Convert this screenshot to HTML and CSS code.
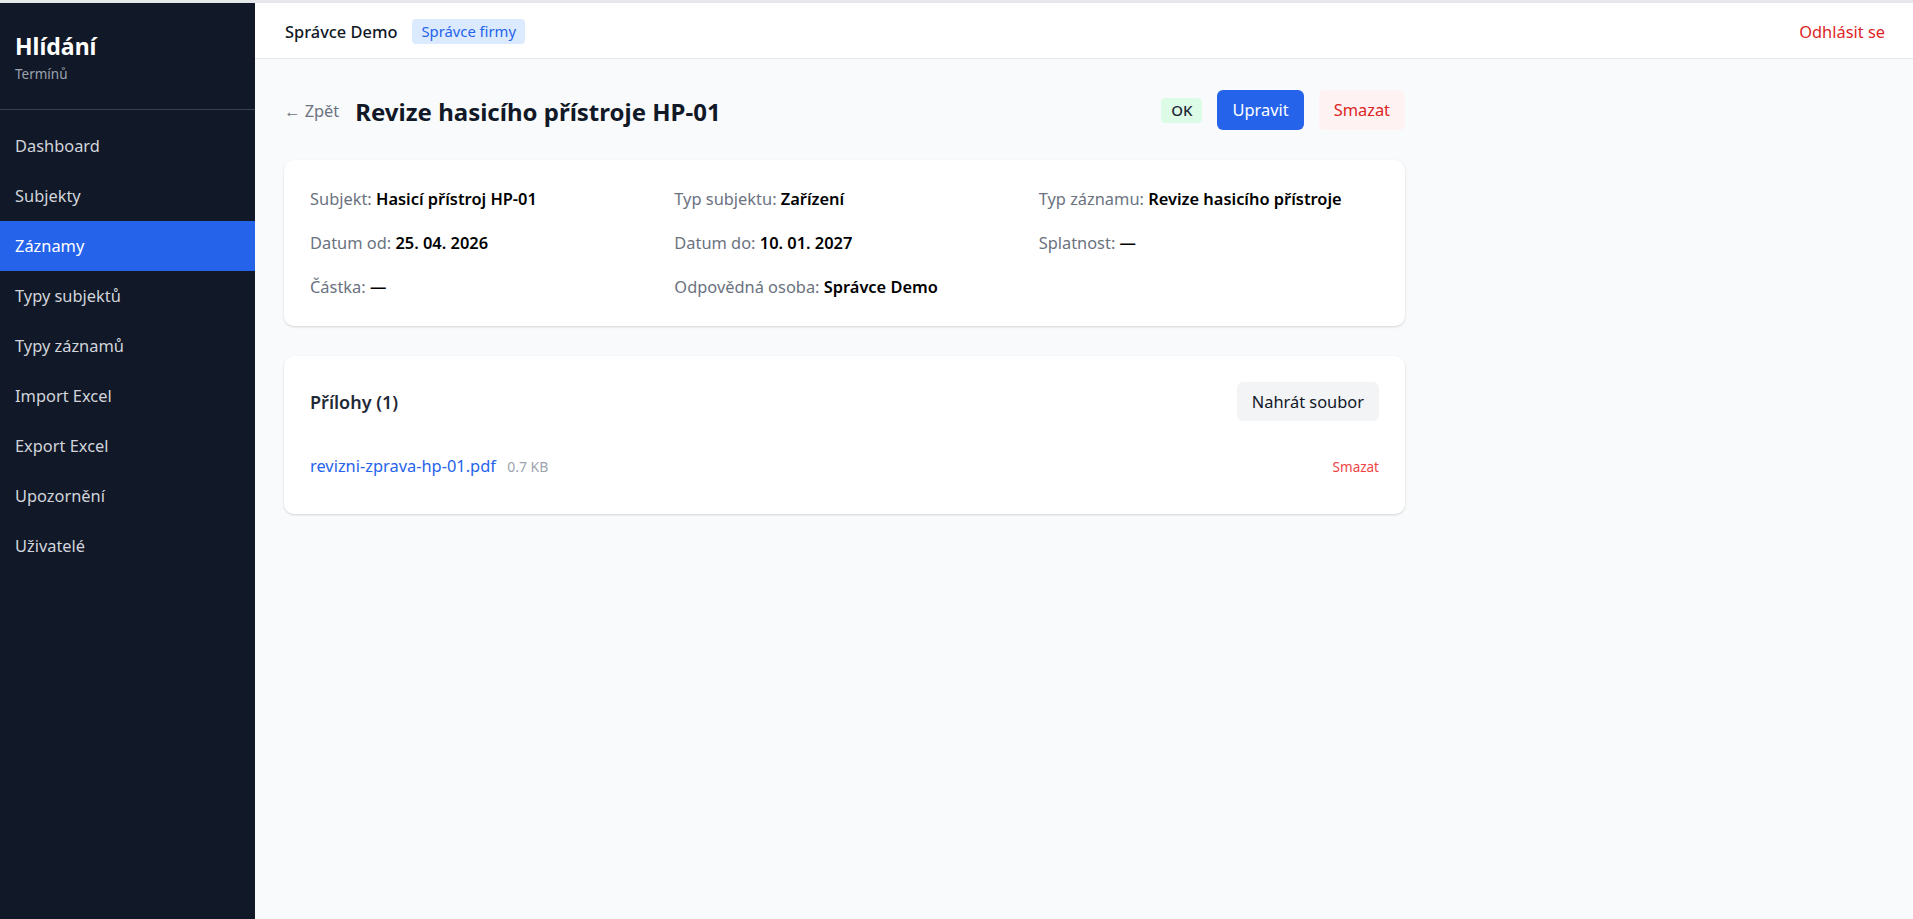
FILE: index.html
```html
<!DOCTYPE html>
<html lang="cs">

<head>
    <meta charset="UTF-8">
    <meta name="viewport" content="width=device-width, initial-scale=1.0">
    <title>Hlídání Termínů</title>
    <link rel="stylesheet" href="styles.css">
</head>

<body>
    <div class="app">
        <aside class="sidebar">
            <div class="brand">
                <div class="brand-name">Hlídání</div>
                <div class="brand-sub">Termínů</div>
            </div>
            <nav class="nav">
                <a href="#">Dashboard</a>
                <a href="#">Subjekty</a>
                <a href="#" class="active">Záznamy</a>
                <a href="#">Typy subjektů</a>
                <a href="#">Typy záznamů</a>
                <a href="#">Import Excel</a>
                <a href="#">Export Excel</a>
                <a href="#">Upozornění</a>
                <a href="#">Uživatelé</a>
            </nav>
        </aside>

        <div class="main">
            <header class="topbar">
                <div class="user">
                    <span class="user-name">Správce Demo</span>
                    <span class="role">Správce firmy</span>
                </div>
                <a href="#" class="logout">Odhlásit se</a>
            </header>

            <div class="content">
                <div class="page-head">
                    <div class="page-title">
                        <a href="#" class="back">&larr; Zpět</a>
                        <h1>Revize hasicího přístroje HP-01</h1>
                    </div>
                    <div class="actions">
                        <span class="status">OK</span>
                        <button class="btn btn-primary">Upravit</button>
                        <button class="btn btn-danger">Smazat</button>
                    </div>
                </div>

                <!-- detail zaznamu -->
                <section class="card">
                    <div class="details">
                        <div><span class="label">Subjekt:</span> <b>Hasicí přístroj HP-01</b></div>
                        <div><span class="label">Typ subjektu:</span> <b>Zařízení</b></div>
                        <div><span class="label">Typ záznamu:</span> <b>Revize hasicího přístroje</b></div>
                        <div><span class="label">Datum od:</span> <b>25. 04. 2026</b></div>
                        <div><span class="label">Datum do:</span> <b>10. 01. 2027</b></div>
                        <div><span class="label">Splatnost:</span> <b>&mdash;</b></div>
                        <div><span class="label">Částka:</span> <b>&mdash;</b></div>
                        <div><span class="label">Odpovědná osoba:</span> <b>Správce Demo</b></div>
                    </div>
                </section>

                <!-- prilohy -->
                <section class="card">
                    <div class="card-head">
                        <h2>Přílohy (1)</h2>
                        <button class="btn btn-light">Nahrát soubor</button>
                    </div>
                    <ul class="files">
                        <li>
                            <div>
                                <a href="#" class="file-link">revizni-zprava-hp-01.pdf</a>
                                <span class="file-size">0.7 KB</span>
                            </div>
                            <a href="#" class="file-delete">Smazat</a>
                        </li>
                    </ul>
                </section>
            </div>
        </div>
    </div>
</body>

</html>
```

FILE: styles.css
```css
* {
    box-sizing: border-box;
}

body {
    margin: 0;
    font-family: "Noto Sans", "Open Sans", sans-serif;
    font-size: 16.4px;
    color: #111827;
    background-color: #f9fafb;
}

a {
    text-decoration: none;
}

button {
    font-family: inherit;
    font-size: inherit;
    border: none;
    cursor: pointer;
}

.app {
    display: flex;
    min-height: 100vh;
    border-top: 3px solid #e5e7eb;
}

/* sidebar */
.sidebar {
    flex: 0 0 255px;
    width: 255px;
    background-color: #111827;
}

.brand {
    height: 107px;
    padding: 28px 15px 0;
    border-bottom: 1px solid #374151;
}

.brand-name {
    font-size: 23px;
    font-weight: 700;
    line-height: 30px;
    color: #fff;
}

.brand-sub {
    margin-top: 3px;
    font-size: 13.5px;
    line-height: 20px;
    color: #9ca3af;
}

.nav {
    padding-top: 11px;
}

.nav a {
    display: block;
    padding: 13px 15px;
    line-height: 24px;
    color: #d1d5db;
}

.nav a.active {
    color: #fff;
    background-color: #2563eb;
}

/* main column */
.main {
    flex: 1;
    min-width: 0;
}

.topbar {
    display: flex;
    align-items: center;
    justify-content: space-between;
    height: 56px;
    padding: 2px 28px 0 30px;
    background-color: #fff;
    border-bottom: 1px solid #e5e7eb;
}

.user {
    display: flex;
    align-items: center;
    gap: 15px;
}

.user-name {
    font-weight: 500;
}

.role {
    padding: 2px 9px;
    font-size: 14.8px;
    line-height: 21px;
    color: #2563eb;
    background-color: #dbeafe;
    border-radius: 4px;
}

.logout {
    color: #dc2626;
}

.content {
    max-width: 1179px;
    padding: 31px 29px;
}

.page-head {
    display: flex;
    align-items: center;
    justify-content: space-between;
    margin-bottom: 30px;
}

.page-title {
    display: flex;
    align-items: center;
    gap: 16px;
}

.back {
    color: #6b7280;
}

h1 {
    margin: 4px 0 0;
    font-size: 24px;
    font-weight: 700;
    line-height: 32px;
}

.actions {
    display: flex;
    align-items: center;
    gap: 15px;
}

.status {
    padding: 2px 10px;
    font-size: 15px;
    font-weight: 500;
    line-height: 21px;
    color: #1f2937;
    background-color: #dcfce7;
    border-radius: 4px;
}

.btn {
    height: 40px;
    padding: 0 15px;
    line-height: 40px;
    border-radius: 6px;
}

.btn-primary {
    color: #fff;
    background-color: #2563eb;
}

.btn-danger {
    color: #dc2626;
    background-color: #fef2f2;
}

.btn-light {
    height: 39px;
    line-height: 39px;
    color: #111827;
    background-color: #f3f4f6;
}

/* cards */
.card {
    margin-bottom: 30px;
    padding: 26px;
    background-color: #fff;
    border-radius: 10px;
    box-shadow: 0 1px 3px rgba(0, 0, 0, 0.1), 0 1px 2px rgba(0, 0, 0, 0.06);
}

.details {
    display: grid;
    grid-template-columns: repeat(3, 1fr);
    gap: 18px 24px;
    line-height: 26px;
}

.label {
    color: #6b7280;
}

.details b {
    font-weight: 600;
    color: #000;
}

.card-head {
    display: flex;
    align-items: center;
    justify-content: space-between;
    margin-bottom: 24px;
}

h2 {
    margin: 0;
    font-size: 18px;
    font-weight: 600;
    color: #1f2937;
}

.files {
    margin: 0;
    padding: 0;
    list-style: none;
}

.files li {
    display: flex;
    align-items: center;
    justify-content: space-between;
    padding: 9px 0;
    line-height: 24px;
}

.file-link {
    color: #2563eb;
}

.file-size {
    margin-left: 7px;
    font-size: 14px;
    color: #9ca3af;
}

.file-delete {
    font-size: 13.5px;
    color: #ef4444;
}
```
